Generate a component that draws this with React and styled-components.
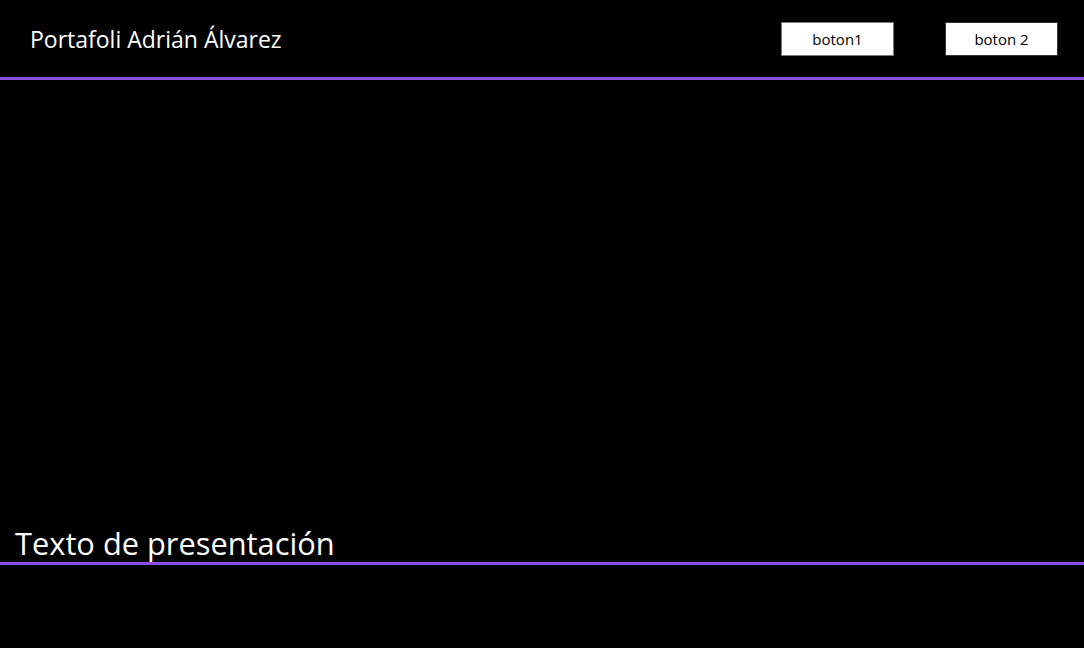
import styled, { createGlobalStyle } from 'styled-components';

const GlobalStyle = createGlobalStyle`
  html, body {
    margin: 0;
    background-color: #000;
    font-family: 'Open Sans', 'Noto Sans', sans-serif;
  }
`;

const Page = styled.div`
  min-height: 648px;
  background-color: #000;
  color: #fff;
`;

const Header = styled.header`
  height: 77px;
  display: flex;
  align-items: center;
  justify-content: space-between;
  padding: 0 26px 0 30px;
  border-bottom: 3px solid #8a50e8;
`;

const Title = styled.h1`
  margin: 0;
  font-size: 23px;
  font-weight: 400;
  padding-top: 1px;
`;

const Nav = styled.nav`
  display: flex;
  gap: 51px;
`;

const Button = styled.button`
  width: 113px;
  height: 34px;
  background-color: #fff;
  border: 1px solid ${(p) => (p.$dark ? '#333' : '#777')};
  font-family: 'Open Sans', sans-serif;
  font-size: 15px;
  color: #000;
  padding: 0;
`;

const Hero = styled.section`
  height: 482px;
  display: flex;
  align-items: flex-end;
  padding: 0 15px;
  border-bottom: 3px solid #8a50e8;
`;

const Intro = styled.h2`
  margin: 0;
  font-size: 30.8px;
  font-weight: 400;
  line-height: 31px;
  padding-bottom: 3px;
`;

export default function App() {
  return (
    <>
      <GlobalStyle />
      <Page>
        <Header>
          <Title>Portafoli Adrián Álvarez</Title>
          <Nav>
            <Button>boton1</Button>
            <Button $dark>boton 2</Button>
          </Nav>
        </Header>
        <Hero>
          <Intro>Texto de presentación</Intro>
        </Hero>
      </Page>
    </>
  );
}
